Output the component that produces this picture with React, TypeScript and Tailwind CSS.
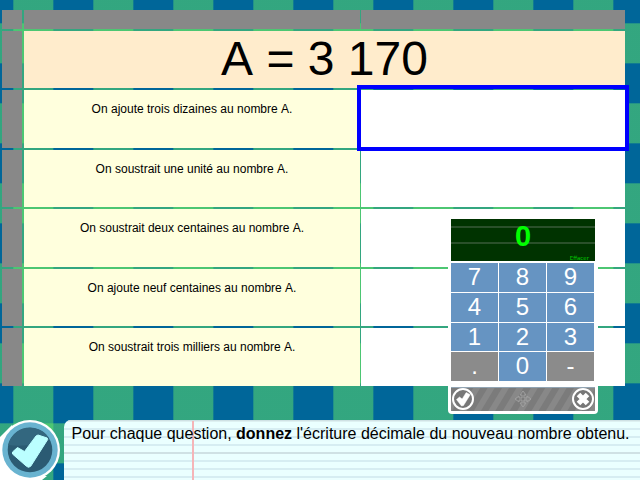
import React from "react";

const band = (dir: string, start: number) => {
  const c = (a: number) => `rgba(102,230,102,${a})`;
  return `repeating-linear-gradient(${dir}, ${c(0)} 0, ${c(0)} ${start}px, ${c(0.34)} ${start}px, ${c(0.34)} ${start + 1}px, ${c(0.5)} ${start + 1}px, ${c(0.5)} ${start + 40}px, ${c(0.17)} ${start + 40}px, ${c(0.17)} ${start + 41}px, ${c(0)} ${start + 41}px, ${c(0)} 80px)`;
};

const rows = [
  { text: "On ajoute trois dizaines au nombre A.", h: "h-[58px]" },
  { text: "On soustrait une unité au nombre A.", h: "h-[57px]" },
  { text: "On soustrait deux centaines au nombre A.", h: "h-[58px]" },
  { text: "On ajoute neuf centaines au nombre A.", h: "h-[57px]" },
  { text: "On soustrait trois milliers au nombre A.", h: "h-[58px]" },
];

const keys = ["7", "8", "9", "4", "5", "6", "1", "2", "3", ".", "0", "-"];

function Keypad() {
  return (
    <div className="absolute left-[448px] top-[216px] flex h-[198px] w-[150px] flex-col rounded-[4px] bg-white px-[3px] pt-[3px]">
      <div className="relative h-[42px] w-[144px] bg-[#003300] text-[#00ff00]">
        <div className="absolute top-[7px] h-[2px] w-full bg-[#2a502a]" />
        <div className="absolute top-[23px] h-[2px] w-full bg-[#2a502a]" />
        <div className="absolute inset-x-0 top-0 text-center text-[29px] font-bold leading-[34px]">0</div>
        <div className="absolute right-[6px] top-[35px] font-['DejaVu_Sans',sans-serif] text-[5.5px] leading-[8px] text-[#00c800]">Effacer</div>
      </div>
      <div className="mt-[2px] grid w-[143px] grid-cols-3 grid-rows-[29px_29px_28px_29px] gap-px text-center text-[24px] leading-[27px] text-white">
        {keys.map((k) => (
          <div key={k} className={k === "." || k === "-" ? "bg-[#8b8b8b]" : "bg-[#6694c2]"}>{k}</div>
        ))}
      </div>
      <div className="mt-[6px] h-[24px] w-[144px]">
        <svg width="144" height="24" viewBox="0 0 144 24">
          <rect width="144" height="24" fill="#7b7b7b" />
          {Array.from({ length: 11 }, (_, i) => (
            <path key={i} d={`M${i * 14.4 - 6} 24l14.400-24h7l-14.400 24z`} fill="#888" />
          ))}
          <rect width="144" height="1" fill="#91a4b3" />
          <circle cx="12" cy="12" r="10" fill="#777" stroke="#fff" strokeWidth="2" />
          <path d="M5.500 12.500l3-2.500 2.700 2 4-6.500 4 2.200-6.700 10.800-2 .5z" fill="#fff" stroke="#fff" strokeWidth=".5" strokeLinejoin="round" />
          <circle cx="132" cy="12" r="10" fill="#777" stroke="#fff" strokeWidth="2" />
          <path d="M127.5 7.5l9 9m0-9l-9 9" stroke="#fff" strokeWidth="5" />
          <path d="M72 4l3 4h-2v3h3V9l4 3-4 3v-2h-3v3h2l-3 4-3-4h2v-3h-3v2l-4-3 4-3v2h3V8h-2z" fill="none" stroke="#a0a0a0" strokeWidth="1" />
        </svg>
      </div>
    </div>
  );
}

function Badge() {
  return (
    <svg className="h-[60px] w-[64px] shrink-0" viewBox="0 0 64 60">
      <path d="M0 17L12 5l24 44-11 11H0z" fill="#fff" />
      <path d="M18 56h29L42 60H18z" fill="#fff" />
      <circle cx="30" cy="30" r="30" fill="#fff" />
      <circle cx="30" cy="30" r="27.7" fill="#69b3d0" />
      <circle cx="30" cy="30" r="22.3" fill="#2b5b73" />
      <path d="M8 25a22.500 22.500 0 0 1 41-7Q32 28 8 25z" fill="#33677f" />
      <path d="M12.500 32l5-4.500 7 4 11.500-15.500 2-1 9.200 3 .5 1.500-17 26.800-2.200 1-2-1L12.500 34z" fill="#bff" stroke="#bff" strokeWidth="1" strokeLinejoin="round" />
    </svg>
  );
}

export default function App() {
  return (
    <div
      className="relative flex h-[480px] w-[640px] flex-col justify-between overflow-hidden bg-[#006699] font-['Liberation_Sans',Arial,sans-serif] text-black [font-kerning:none]"
      style={{ backgroundImage: `${band("90deg", 13)}, ${band("180deg", 23)}` }}
    >
      <div className="ml-[2px] mt-[10px] flex w-[623px] flex-col gap-[2px]">
        <div className="flex h-[19px]">
          <div className="w-[20px] bg-[#888]" />
          <div className="ml-[2px] w-[336px] bg-[#888]" />
          <div className="ml-px flex-1 bg-[#888]" />
        </div>
        <div className="flex h-[57px] gap-[2px]">
          <div className="w-[20px] bg-[#888]" />
          <div className="flex-1 bg-[#ffeccc] text-center text-[48px] leading-[56px]">A = 3 170</div>
        </div>
        {rows.map((r) => (
          <div key={r.text} className={`flex ${r.h}`}>
            <div className="w-[20px] bg-[#888]" />
            <div className="ml-[2px] w-[336px] bg-[#ffffdd] pt-[12px] text-center text-[12px] leading-[14px]">{r.text}</div>
            <div className="ml-px flex-1 bg-white" />
          </div>
        ))}
      </div>
      <div className="flex h-[60px]">
        <Badge />
        <div className="relative flex-1 overflow-hidden rounded-tl-[7px] bg-[#eaffff]">
          <svg className="absolute inset-0" width="576" height="60">
            <path d="M0 .5h576M0 33h576" stroke="#cfe1e4" strokeWidth="2" />
            <path d="M0 9h576M0 17h576M0 25h576M0 41h576M0 49h576M0 57h576" stroke="#d6edf2" strokeWidth="2" />
            <path d="M129 1v59" stroke="#f5b5b8" strokeWidth="2" />
          </svg>
          <div className="relative whitespace-nowrap pl-[7.5px] pt-[5px] text-[16px] leading-[18px]">
            Pour chaque question, <b>donnez</b> l'écriture décimale du nouveau nombre obtenu.
          </div>
        </div>
      </div>
      <div className="absolute left-[357px] top-[85px] h-[66px] w-[272px] border-4 border-[#0000ff]" />
      <Keypad />
    </div>
  );
}
